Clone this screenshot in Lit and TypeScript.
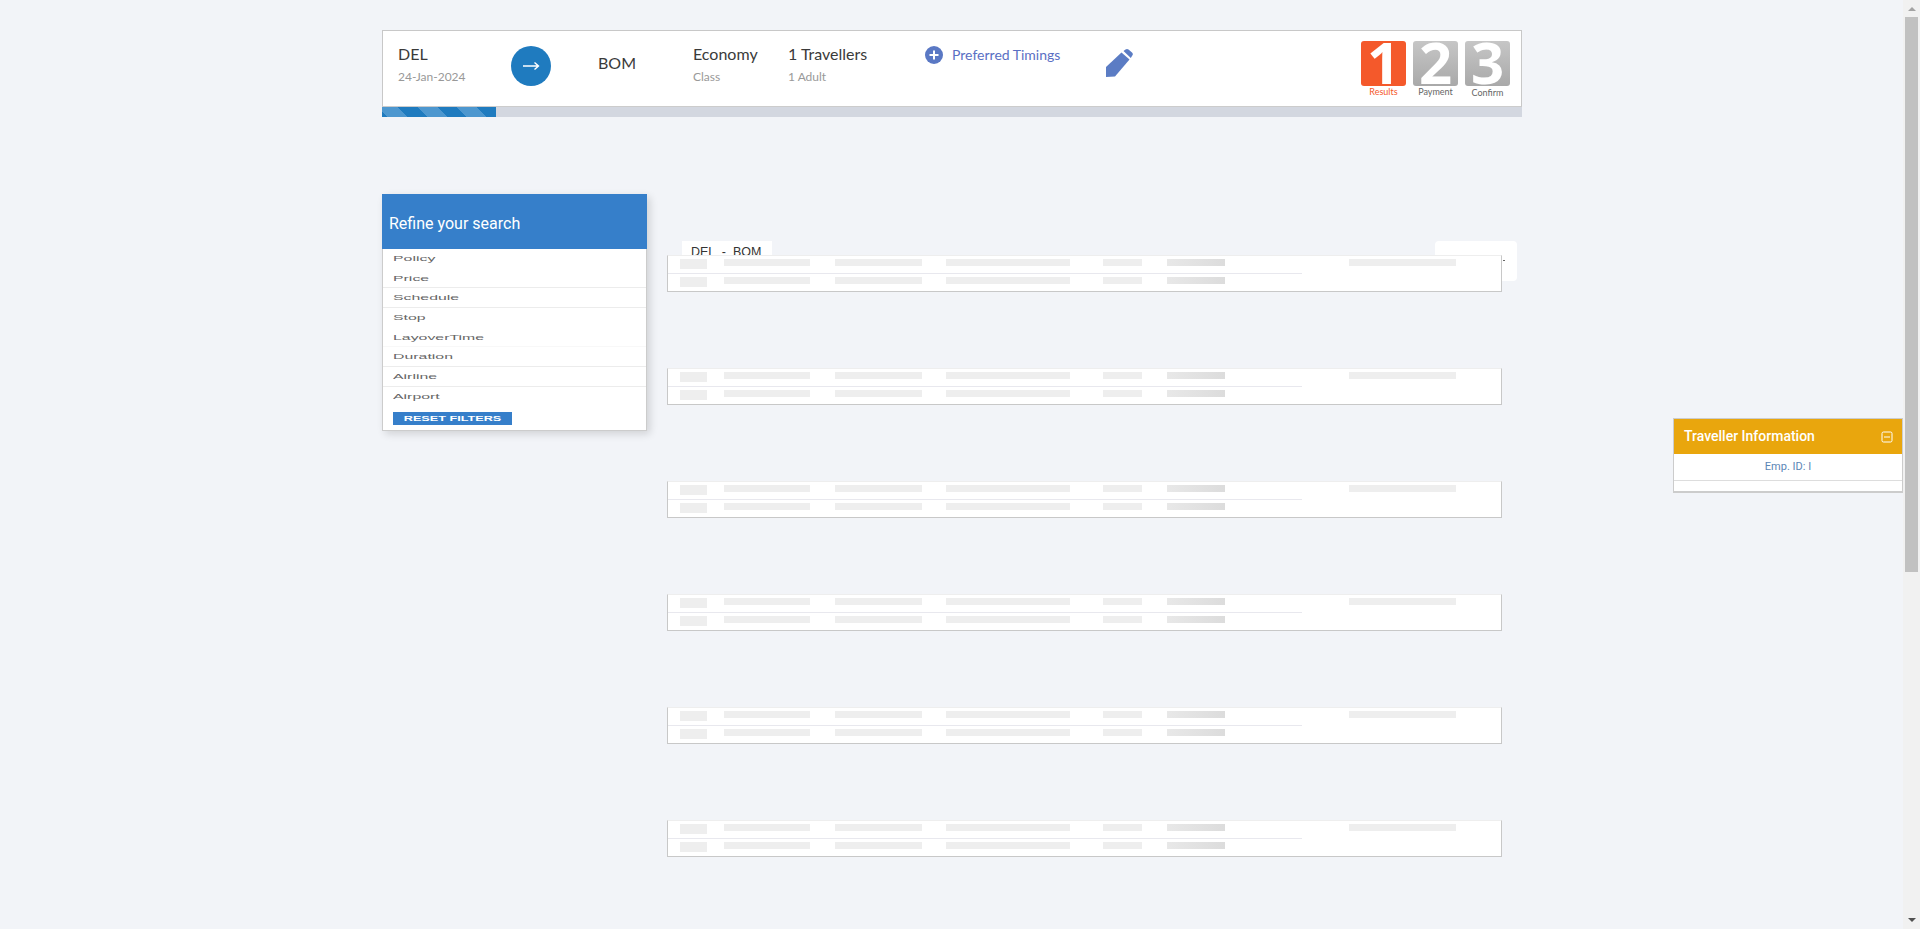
import { LitElement, html, css } from 'lit';
import { customElement } from 'lit/decorators.js';

const FILTERS = [
  { label: 'Policy', line: false },
  { label: 'Price', line: true },
  { label: 'Schedule', line: true },
  { label: 'Stop', line: false },
  { label: 'LayoverTime', line: false, faint: true },
  { label: 'Duration', line: true },
  { label: 'Airline', line: true },
  { label: 'Airport', line: false },
];

const STEPS = [
  { n: '1', label: 'Results', on: true },
  { n: '2', label: 'Payment', on: false },
  { n: '3', label: 'Confirm', on: false },
];

@customElement('app-root')
export class AppRoot extends LitElement {
  static styles = css`
    :host {
      display: block;
      font-family: Lato, 'Liberation Sans', sans-serif;
      color: #333;
    }
    * {
      box-sizing: border-box;
    }
    .page {
      height: 100vh;
      overflow: hidden;
      background: #f2f4f8;
      padding: 30px 0 0 382px;
      position: relative;
    }
    .wrap {
      width: 1140px;
    }

    /* page scrollbar */
    .scrollbar {
      position: absolute;
      top: 0;
      right: 0;
      bottom: 0;
      width: 17px;
      background: #f1f1f1;
      display: flex;
      flex-direction: column;
      align-items: center;
      justify-content: space-between;
    }
    .scroll-top {
      display: flex;
      flex-direction: column;
      align-items: center;
    }
    .arrow-up {
      margin-top: 7px;
      width: 0;
      height: 0;
      border: 4px solid transparent;
      border-top: 0;
      border-bottom: 4px solid #a3a3a3;
    }
    .thumb {
      margin-top: 6px;
      width: 13px;
      height: 555px;
      background: #c1c1c1;
    }
    .arrow-down {
      margin-bottom: 7px;
      width: 0;
      height: 0;
      border: 4px solid transparent;
      border-bottom: 0;
      border-top: 4px solid #505050;
    }

    /* search summary */
    .summary {
      height: 77px;
      background: #fff;
      border: 1px solid #c8c8c8;
      border-bottom-color: #ccc;
      display: flex;
      padding-left: 15px;
    }
    .col {
      padding-top: 13px;
      flex: none;
    }
    .big {
      font-size: 16px;
      line-height: 19px;
      color: #3a3a3a;
    }
    .small {
      font-size: 12px;
      line-height: 14px;
      color: #999;
      margin-top: 7px;
    }
    .col-from { width: 113px; }
    .col-arrow { width: 87px; padding-top: 15px; }
    .circle {
      width: 40px;
      height: 40px;
      border-radius: 50%;
      background: #1f7bbf;
      display: flex;
      align-items: center;
      justify-content: center;
    }
    .col-to { width: 95px; padding-top: 22px; }
    .col-class { width: 95px; }
    .col-trav { width: 137px; }
    .col-pref {
      width: 181px;
      padding-top: 15px;
      display: flex;
      gap: 9px;
      color: #5a6fc4;
    }
    .pref-text {
      font-size: 14px;
      line-height: 17px;
    }
    .col-edit { padding-top: 18px; }
    .steps {
      margin-left: auto;
      margin-right: 11px;
      padding-top: 10px;
      display: flex;
      gap: 7px;
    }
    .step {
      width: 45px;
      text-align: center;
    }
    .tile {
      height: 45px;
      border-radius: 3px;
      background: linear-gradient(#c6c6c6, #a9a9a9);
      color: #fff;
      font-family: 'Open Sans', sans-serif;
      font-weight: 700;
      font-size: 58px;
      line-height: 41px;
      overflow: hidden;
    }
    .step.on .tile {
      background: #f4592b;
    }
    .step-label {
      font-size: 9px;
      line-height: 11px;
      margin-top: 0;
      color: #666;
      white-space: nowrap;
    }
    .step:last-child .step-label {
      margin-top: 1px;
    }
    .step.on .step-label {
      color: #f4592b;
    }
    .progress {
      height: 10px;
      background: #d3d7e0;
    }
    .progress-fill {
      width: 114px;
      height: 100%;
      background: repeating-linear-gradient(45deg, #1f7bbf 0 4px, #4d97cf 4px 18px, #1f7bbf 18px 28px);
    }

    .content {
      display: flex;
      margin-top: 77px;
      align-items: flex-start;
    }

    /* filters */
    .sidebar {
      width: 265px;
      flex: none;
      background: #fff;
      box-shadow: 3px 3px 8px rgba(0, 0, 0, 0.14);
    }
    .side-head {
      height: 55px;
      background: #367fca;
      color: #fff;
      font-family: Roboto, sans-serif;
      font-size: 16px;
      line-height: 19px;
      padding: 20px 0 0 7px;
    }
    .side-body {
      border: 1px solid #ccc;
      border-top: 0;
      height: 182px;
    }
    .filter {
      height: 19.7px;
      padding-left: 10px;
      overflow: hidden;
    }
    .filter.line {
      border-bottom: 1px solid #ececec;
    }
    .filter.faint {
      border-bottom: 1px solid #f8f8f8;
    }
    .filter span {
      display: block;
      font-family: 'Liberation Sans', sans-serif;
      font-size: 13px;
      line-height: 19px;
      color: #666;
      transform: scale(1.22, 0.6);
      transform-origin: left center;
    }
    .reset {
      width: 119px;
      height: 13px;
      margin: 5px 0 0 10px;
      background: #367fca;
      overflow: hidden;
    }
    .reset span {
      display: block;
      text-align: center;
      font-family: 'Liberation Sans', sans-serif;
      font-weight: 700;
      font-size: 11px;
      line-height: 13px;
      color: #fff;
      transform: scale(1.15, 0.6);
    }

    /* results */
    .results {
      margin-left: 20px;
      width: 835px;
      padding-top: 47px;
    }
    .tabs {
      height: 14px;
      padding-left: 15px;
      display: flex;
      justify-content: space-between;
      width: 850px;
    }
    .tab {
      width: 90px;
      height: 14px;
      background: #fff;
      overflow: hidden;
      font-family: 'Liberation Sans', sans-serif;
      font-size: 12.5px;
      line-height: 22px;
      color: #333;
      padding-left: 9px;
      white-space: pre;
    }
    .sort {
      width: 82px;
      height: 40px;
      background: #fff;
      border-radius: 4px;
      padding: 19px 0 0 68px;
    }
    .caret {
      width: 2px;
      height: 1px;
      background: #666;
    }
    .cards {
      display: flex;
      flex-direction: column;
      gap: 76.1px;
    }
    .card {
      position: relative;
      height: 37px;
      background: #fff;
      border-top: 1px solid #eee;
      border-left: 1px solid #c8c8c8;
      border-right: 1px solid #c8c8c8;
      border-bottom: 1px solid #c8c8c8;
    }
    .card-row {
      height: 18px;
      display: flex;
      padding: 3px 0 0 12px;
      align-items: flex-start;
    }
    .card-row.first {
      width: 634px;
      border-bottom: 1px solid #e8e8ee;
    }
    .bone {
      height: 7px;
      background: #eee;
      flex: none;
    }
    .bone.logo { width: 27px; height: 10px; margin-right: 17px; }
    .bone.a { width: 86px; margin-right: 25px; }
    .bone.b { width: 87px; margin-right: 24px; }
    .bone.c { width: 124px; margin-right: 33px; }
    .bone.d { width: 39px; margin-right: 25px; }
    .bone.e {
      width: 58px;
      background: linear-gradient(90deg, #e8e8e8, #dcdcdc);
    }
    .bone.f {
      position: absolute;
      left: 681px;
      top: 3px;
      width: 107px;
    }

    /* traveller panel */
    .traveller {
      position: absolute;
      left: 1673px;
      top: 418px;
      width: 230px;
      height: 75px;
      border: 1px solid #ccc;
      border-bottom-width: 2px;
      background: #fff;
      font-family: Roboto, sans-serif;
    }
    .trav-head {
      height: 35px;
      background: #e9a60d;
      color: #fff;
      font-size: 14px;
      font-weight: 500;
      line-height: 35px;
      padding-left: 10px;
      display: flex;
      justify-content: space-between;
      align-items: center;
      padding-right: 9px;
    }
    .trav-id {
      height: 27px;
      border-bottom: 1px solid #ddd;
      text-align: center;
      font-size: 11px;
      line-height: 25px;
      color: #5b86b5;
    }
  `;

  private renderCard() {
    const row = (first: boolean) => html`
      <div class="card-row ${first ? 'first' : ''}">
        <div class="bone logo"></div>
        <div class="bone a"></div>
        <div class="bone b"></div>
        <div class="bone c"></div>
        <div class="bone d"></div>
        <div class="bone e"></div>
      </div>
    `;
    return html`
      <div class="card">
        ${row(true)}
        <div class="bone f"></div>
        ${row(false)}
      </div>
    `;
  }

  render() {
    return html`
      <div class="page">
        <div class="wrap">
          <div class="summary">
            <div class="col col-from">
              <div class="big">DEL</div>
              <div class="small">24-Jan-2024</div>
            </div>
            <div class="col col-arrow">
              <div class="circle">
                <svg width="18" height="10" viewBox="0 0 18 10" fill="none" stroke="#fff" stroke-width="1.4">
                  <path d="M1 5h15.5M12.5 1.500l4 3.500-4 3.500" />
                </svg>
              </div>
            </div>
            <div class="col col-to"><div class="big">BOM</div></div>
            <div class="col col-class">
              <div class="big">Economy</div>
              <div class="small">Class</div>
            </div>
            <div class="col col-trav">
              <div class="big">1 Travellers</div>
              <div class="small">1 Adult</div>
            </div>
            <div class="col col-pref">
              <svg width="18" height="18" viewBox="0 0 18 18">
                <circle cx="9" cy="9" r="9" fill="#5a78c4" />
                <path d="M9 4.500v9M4.500 9h9" stroke="#fff" stroke-width="2" />
              </svg>
              <span class="pref-text">Preferred Timings</span>
            </div>
            <div class="col col-edit">
              <svg width="27" height="28" viewBox="0 0 27 28" fill="#5b7cc4">
                <path d="M0 18L15.500 3.500l8 7L9 27.500 0 28z" />
                <path d="M17.500 2l2-1.500q1.500-1 3 0l3.500 3q1.500 1.500.3 3L24.800 9z" />
              </svg>
            </div>
            <div class="steps">
              ${STEPS.map(
                (s) => html`
                  <div class="step ${s.on ? 'on' : ''}">
                    <div class="tile">${s.n}</div>
                    <div class="step-label">${s.label}</div>
                  </div>
                `
              )}
            </div>
          </div>
          <div class="progress"><div class="progress-fill"></div></div>

          <div class="content">
            <div class="sidebar">
              <div class="side-head">Refine your search</div>
              <div class="side-body">
                ${FILTERS.map(
                  (f) => html`
                    <div class="filter ${f.line ? 'line' : ''} ${f.faint ? 'faint' : ''}">
                      <span>${f.label}</span>
                    </div>
                  `
                )}
                <div class="reset"><span>RESET FILTERS</span></div>
              </div>
            </div>
            <div class="results">
              <div class="tabs">
                <div class="tab">DEL  -  BOM</div>
                <div class="sort"><div class="caret"></div></div>
              </div>
              <div class="cards">
                ${Array.from({ length: 7 }, () => this.renderCard())}
              </div>
            </div>
          </div>
        </div>

        <div class="traveller">
          <div class="trav-head">
            <span>Traveller Information</span>
            <svg width="12" height="12" viewBox="0 0 12 12" fill="none" stroke="#fff" stroke-width="1">
              <rect x="1" y="1" width="10" height="10" rx="1.500" />
              <path d="M3 6h6" />
            </svg>
          </div>
          <div class="trav-id">Emp. ID: I</div>
        </div>

        <div class="scrollbar">
          <div class="scroll-top">
            <div class="arrow-up"></div>
            <div class="thumb"></div>
          </div>
          <div class="arrow-down"></div>
        </div>
      </div>
    `;
  }
}
